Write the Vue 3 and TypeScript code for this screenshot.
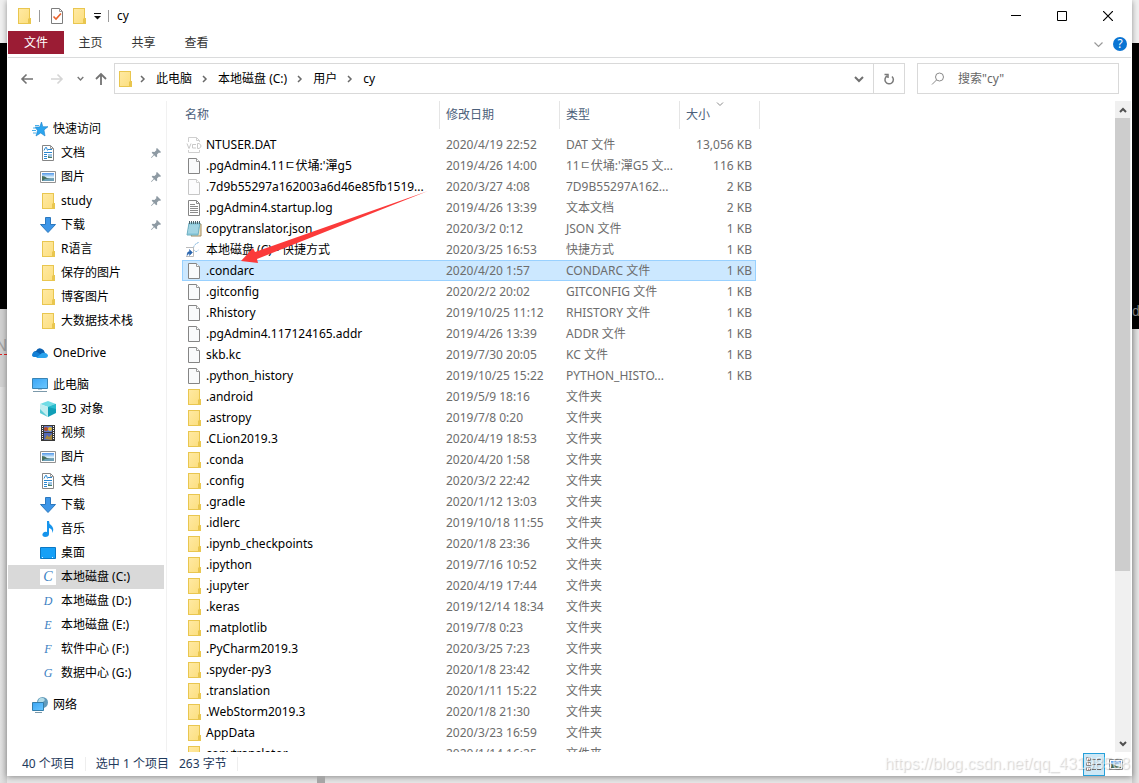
<script setup lang="ts">
import { ref } from 'vue'

interface NavItem { label: string; icon: string; letter?: string; pinned?: boolean; current?: boolean }
interface NavGroup { label: string; icon: string; items: NavItem[] }
interface FileRow { name: string; date: string; type: string; size: string; icon: string; selected?: boolean }

const groups: NavGroup[] = [
  {
    label: '快速访问', icon: 'star', items: [
      { label: '文档', icon: 'doc', pinned: true },
      { label: '图片', icon: 'picture', pinned: true },
      { label: 'study', icon: 'folder', pinned: true },
      { label: '下载', icon: 'download', pinned: true },
      { label: 'R语言', icon: 'folder' },
      { label: '保存的图片', icon: 'folder' },
      { label: '博客图片', icon: 'folder' },
      { label: '大数据技术栈', icon: 'folder' },
    ],
  },
  { label: 'OneDrive', icon: 'cloud', items: [] },
  {
    label: '此电脑', icon: 'pc', items: [
      { label: '3D 对象', icon: 'cube' },
      { label: '视频', icon: 'video' },
      { label: '图片', icon: 'picture' },
      { label: '文档', icon: 'doc' },
      { label: '下载', icon: 'download' },
      { label: '音乐', icon: 'music' },
      { label: '桌面', icon: 'desktop' },
      { label: '本地磁盘 (C:)', icon: 'drive', letter: 'C', current: true },
      { label: '本地磁盘 (D:)', icon: 'drive', letter: 'D' },
      { label: '本地磁盘 (E:)', icon: 'drive', letter: 'E' },
      { label: '软件中心 (F:)', icon: 'drive', letter: 'F' },
      { label: '数据中心 (G:)', icon: 'drive', letter: 'G' },
    ],
  },
  { label: '网络', icon: 'network', items: [] },
]

const folder = (name: string, date: string): FileRow => ({ name, date, type: '文件夹', size: '', icon: 'folder' })

const files: FileRow[] = [
  { name: 'NTUSER.DAT', date: '2020/4/19 22:52', type: 'DAT 文件', size: '13,056 KB', icon: 'vcd' },
  { name: '.pgAdmin4.11ㄷ伏埇:\'潬g5', date: '2019/4/26 14:00', type: '11ㄷ伏埇:\'潬G5 文...', size: '116 KB', icon: 'file' },
  { name: '.7d9b55297a162003a6d46e85fb1519...', date: '2020/3/27 4:08', type: '7D9B55297A162...', size: '2 KB', icon: 'hidden' },
  { name: '.pgAdmin4.startup.log', date: '2019/4/26 13:39', type: '文本文档', size: '2 KB', icon: 'text' },
  { name: 'copytranslator.json', date: '2020/3/2 0:12', type: 'JSON 文件', size: '1 KB', icon: 'notepad' },
  { name: '本地磁盘 (C) - 快捷方式', date: '2020/3/25 16:53', type: '快捷方式', size: '1 KB', icon: 'shortcut' },
  { name: '.condarc', date: '2020/4/20 1:57', type: 'CONDARC 文件', size: '1 KB', icon: 'file', selected: true },
  { name: '.gitconfig', date: '2020/2/2 20:02', type: 'GITCONFIG 文件', size: '1 KB', icon: 'file' },
  { name: '.Rhistory', date: '2019/10/25 11:12', type: 'RHISTORY 文件', size: '1 KB', icon: 'file' },
  { name: '.pgAdmin4.117124165.addr', date: '2019/4/26 13:39', type: 'ADDR 文件', size: '1 KB', icon: 'file' },
  { name: 'skb.kc', date: '2019/7/30 20:05', type: 'KC 文件', size: '1 KB', icon: 'file' },
  { name: '.python_history', date: '2019/10/25 15:22', type: 'PYTHON_HISTO...', size: '1 KB', icon: 'file' },
  folder('.android', '2019/5/9 18:16'),
  folder('.astropy', '2019/7/8 0:20'),
  folder('.CLion2019.3', '2020/4/19 18:53'),
  folder('.conda', '2020/4/20 1:58'),
  folder('.config', '2020/3/2 22:42'),
  folder('.gradle', '2020/1/12 13:03'),
  folder('.idlerc', '2019/10/18 11:55'),
  folder('.ipynb_checkpoints', '2020/1/8 23:36'),
  folder('.ipython', '2019/7/16 10:52'),
  folder('.jupyter', '2020/4/19 17:44'),
  folder('.keras', '2019/12/14 18:34'),
  folder('.matplotlib', '2019/7/8 0:23'),
  folder('.PyCharm2019.3', '2020/3/25 7:23'),
  folder('.spyder-py3', '2020/1/8 23:42'),
  folder('.translation', '2020/1/11 15:22'),
  folder('.WebStorm2019.3', '2020/1/8 21:30'),
  folder('AppData', '2020/3/23 16:59'),
  folder('copytranslator', '2020/1/14 16:25'),
]

const crumbs = ['此电脑', '本地磁盘 (C:)', '用户', 'cy']
const query = ref('')
</script>

<template>
  <div class="desktop">
    <svg class="symbols" aria-hidden="true">
      <defs>
        <linearGradient id="g-folder" x1="0" y1="0" x2="1" y2="1"><stop offset="0" stop-color="#ffe9a2" /><stop offset="1" stop-color="#fcdf80" /></linearGradient>
        <linearGradient id="g-sky" x1="0" y1="0" x2="0" y2="1"><stop offset="0" stop-color="#4f95e8" /><stop offset=".5" stop-color="#d9eefa" /><stop offset="1" stop-color="#fff" /></linearGradient>
        <linearGradient id="g-screen" x1="0" y1="0" x2="1" y2="1"><stop offset="0" stop-color="#3aa5f5" /><stop offset="1" stop-color="#6cc8ff" /></linearGradient>
      </defs>
      <symbol id="folder" viewBox="0 0 16 16"><path d="M2 0h12v10h1v6H2z" fill="#e9c64f" /><path d="M3 1h10v14H3z" fill="url(#g-folder)" /><path d="M12.500 15v-4l1-1v5z" fill="#ffe9a2" stroke="#e9c64f" /></symbol>
      <symbol id="file" viewBox="0 0 16 16"><path d="M2.500.5h8l3 3v12h-11z" fill="#f9fafb" stroke="#858585" /><path d="M10.500.5v3h3" fill="#fff" stroke="#9a9a9a" /></symbol>
      <symbol id="hidden" viewBox="0 0 16 16"><path d="M2.500.5h8l3 3v12h-11z" fill="#fcfcfd" stroke="#c6c6c6" /><path d="M10.500.5v3h3" fill="#fff" stroke="#d0d0d0" /></symbol>
      <symbol id="vcd" viewBox="0 0 16 16"><path d="M2.500 5V.5h8l3 3V5M2.500 13v2.500h11V13M10.500.5v3h3" fill="none" stroke="#cfcfcf" /><path d="M1 6.500l2 5 2-5M10 7.500H6.500v3.500H10M11.500 6.500v5h1.500q2-1 2-2.500t-2-2.500z" fill="none" stroke="#c9c9c9" /></symbol>
      <symbol id="text" viewBox="0 0 16 16"><path d="M2.500.5h8l3 3v12h-11z" fill="#fff" stroke="#858585" /><path d="M10.500.5v3h3M4 4.500h5M4 6.500h8M4 8.500h8M4 10.500h8M4 12.500h8" fill="none" stroke="#8c8c8c" /></symbol>
      <symbol id="notepad" viewBox="0 0 16 16"><path d="M13 3h2v12H5z" fill="#f2e4c1" stroke="#a18a5d" /><path d="M3 2h11l-2 12H1z" fill="#8fcbdc" stroke="#6fb0c2" /><path d="M3 5h10M3 7h9M2 9h10M2 11h10" stroke="#d1edf3" stroke-width=".6" /><path d="M3.500 0v3M5.500 0v3M7.500 0v3M9.500 0v3M11.500 0v3M13.500 0v3" stroke="#4b646c" /></symbol>
      <symbol id="shortcut" viewBox="0 0 16 16"><path d="M12.500.5q-5 2-5 6 0 3 3 3l2-1.500" fill="none" stroke="#6faad8" stroke-dasharray="2 1" /><path d="M-.5 5.500h8v9h-8z" fill="#fff" stroke="#bbb" /><path d="M1 13.500q0-4 2.500-4V7.500l3 3-3 3v-2Q2 11.500 1 13.500z" fill="#2864ad" stroke="#2864ad" stroke-width=".5" /></symbol>
      <symbol id="doc" viewBox="0 0 16 16"><path d="M2.500.5h8l3 3v12h-11z" fill="#fff" stroke="#858585" /><path d="M10.500.5v3h3" fill="none" stroke="#9a9a9a" /><path d="M4 5.500l1.500-3h1l1 3M8 4.500h4M4 7.500h8M4 9.500h3M4 11.500h3M4 13.500h3" fill="none" stroke="#2a87d0" /><path d="M8 9h4v4H8z" fill="#a0c5e5" /><path d="M8 11l2 1h2v1H8z" fill="#4b7b64" /></symbol>
      <symbol id="picture" viewBox="0 0 16 16"><path d="M.5 2.500h15v11H.5z" fill="#fff" stroke="#929292" /><path d="M2 4h12v8H2z" fill="url(#g-sky)" /><path d="M2 7q3 0 5 2l7 1v2H2z" fill="#48705e" /><path d="M5 10l9-1v3H2z" fill="#6da0b8" /></symbol>
      <symbol id="download" viewBox="0 0 16 16"><path d="M5.500.5h5v7h5L8 15.500.5 7.500h5z" fill="#3d96e8" stroke="#2c78be" /></symbol>
      <symbol id="star" viewBox="0 0 16 16"><path d="M9.500 1l1.300 4.700H16l-4 3.200 1 6.100-4.300-3L4 15l1.500-5.500-2.500-3.500h4.700z" fill="#2aa5ef" stroke="#1d82cb" stroke-width=".6" /><path d="M3 4.500h4M1 7h3M0 9.500h4M1 12h3" stroke="#4aaee9" /></symbol>
      <symbol id="cloud" viewBox="0 0 16 16"><path d="M1 9q0-3 3-3Q6 2 10 4q2 .5 3 4l-5 4z" fill="#0a60b0" /><path d="M0 10q1-4 5-3l8 5H3q-3 0-3-2z" fill="#1480d5" /><path d="M4 13l6-5q4-1 6 2 0 3-3 3z" fill="#2ba4ee" /></symbol>
      <symbol id="pc" viewBox="0 0 16 16"><path d="M.5 1.500h15v10H.5z" fill="url(#g-screen)" stroke="#3984b4" /><path d="M6 12h4v1H6z" fill="#b7cad6" /><path d="M1 14.500h14" stroke="#7c99aa" /></symbol>
      <symbol id="cube" viewBox="0 0 16 16"><path d="M0 3l8-3 8 3-8 3z" fill="#71dce5" /><path d="M0 3l8 3v10l-8-4z" fill="#c0edf0" /><path d="M0 8l8 8-8-4z" fill="#5bccd6" /><path d="M8 6l8-3v9l-8 4z" fill="#119fb7" /><path d="M8 6l8-3v5z" fill="#27bccd" /></symbol>
      <symbol id="video" viewBox="0 0 16 16"><path d="M1 0h14v16H1z" fill="#383838" /><path d="M2.500 1v14M13.500 1v14" stroke="#fff" stroke-dasharray="1 1" /><path d="M4 1h8v6H4z" fill="#617acb" /><path d="M4 8h8v7H4z" fill="#5269b8" /><circle cx="6" cy="4" r="2" fill="#b74c28" /><circle cx="10" cy="4" r="2" fill="#e5bb35" /><path d="M5 14l2-4 2 2 3-3v6z" fill="#a9893d" /></symbol>
      <symbol id="music" viewBox="0 0 16 16"><path d="M7 0h2q0 3 2 4 4 4 1 8 1-4-3-5v6q0 3-4 3-4-1-2-4 2-2 4-1z" fill="#1694ec" /></symbol>
      <symbol id="desktop" viewBox="0 0 16 16"><path d="M.5 2.500h15v11H.5z" fill="#16a0f7" stroke="#0b78c4" /><path d="M2 12.500h1M12 12.500h2" stroke="#e0f2fd" stroke-dasharray="1 1" /></symbol>
      <symbol id="network" viewBox="0 0 16 16"><circle cx="10.500" cy="5.500" r="5.500" fill="#629bbb" /><path d="M7 2q4-3 6 1l-3 3-4-1z" fill="#b4dce7" /><path d="M.5 5.500h11v8H.5z" fill="url(#g-screen)" stroke="#347eaa" /><path d="M3 15.500h7" stroke="#7c99aa" /></symbol>
      <symbol id="pin" viewBox="0 0 10 10"><path d="M6 0l4 4-1 1-1-.5-2 2 .2 2-1 .8-2-2L.5 10 0 9.500l2.700-2.700-2-2 .8-1 2 .2 2-2L5 1z" fill="#8e9aa3" /></symbol>
      <symbol id="right" viewBox="0 0 8 8"><path d="M2 1l3 3-3 3" fill="none" stroke="#6a6a6a" stroke-width="1.500" /></symbol>
      <symbol id="down" viewBox="0 0 10 10"><path d="M1 3l4 4 4-4" fill="none" stroke="currentColor" stroke-width="2" /></symbol>
    </svg>

    <div class="backdrop left"><div class="pale"></div><div class="dark"></div><div class="grey"><span>HN</span></div><div class="rest"></div></div>

    <main class="window">
      <header class="titlebar">
        <svg class="i16"><use href="#folder" /></svg>
        <span class="bar first"></span>
        <button class="plain quick" aria-label="属性"><svg class="i16" viewBox="0 0 16 16"><path d="M2.500.5h8l3 3v12h-11z" fill="#fff" stroke="#7d7d7d" /><path d="M10.500.5v3h3" fill="none" stroke="#9a9a9a" /><path d="M4.500 8.500l2.500 2.500 5-5.500" fill="none" stroke="#e9622c" stroke-width="1.600" /></svg></button>
        <button class="plain quick" aria-label="新建文件夹"><svg class="i16"><use href="#folder" /></svg></button>
        <button class="plain customize" aria-label="自定义快速访问工具栏"><svg width="8" height="8" viewBox="0 0 8 8"><path d="M1 1.500h7" stroke="#111" /><path d="M1 4h7L4.500 7.500z" fill="#111" /></svg></button>
        <span class="bar second"></span>
        <h1>cy</h1>
        <div class="captions">
          <button class="plain" aria-label="最小化"><svg width="10" height="10"><path d="M0 4.500h10" stroke="#000" /></svg></button>
          <button class="plain" aria-label="最大化"><svg width="10" height="10"><path d="M.5.5h9v9h-9z" fill="none" stroke="#000" /></svg></button>
          <button class="plain" aria-label="关闭"><svg width="10" height="10"><path d="M0 0l10 10M10 0L0 10" stroke="#000" stroke-width="1.200" /></svg></button>
        </div>
      </header>

      <nav class="tabs">
        <button class="file-tab">文件</button>
        <button>主页</button><button>共享</button><button>查看</button>
        <span class="grow"></span>
        <button class="plain expand" aria-label="展开功能区"><svg width="9" height="9" viewBox="0 0 9 9"><path d="M.5 2.500l4 4 4-4" fill="none" stroke="#999" stroke-width="1.200" /></svg></button>
        <button class="help" aria-label="帮助">?</button>
      </nav>

      <div class="navigation">
        <button class="plain back" aria-label="返回"><svg width="14" height="12" viewBox="0 0 14 12"><path d="M13 6H2M6.500 1.500L2 6l4.500 4.500" fill="none" stroke="#737373" stroke-width="1.600" /></svg></button>
        <button class="plain forward" aria-label="前进"><svg width="14" height="12" viewBox="0 0 14 12"><path d="M0 6h11M6.500 1.500L11 6l-4.500 4.500" fill="none" stroke="#d5d5d5" stroke-width="1.600" /></svg></button>
        <button class="plain recent" aria-label="最近浏览的位置"><svg width="7" height="7"><use href="#down" /></svg></button>
        <button class="plain up" aria-label="上移"><svg width="12" height="14" viewBox="0 0 12 14"><path d="M6 13V2M1 7l5-5 5 5" fill="none" stroke="#737373" stroke-width="1.800" /></svg></button>
        <div class="address">
          <svg class="i16"><use href="#folder" /></svg>
          <ol>
            <li v-for="crumb in crumbs" :key="crumb"><svg width="8" height="8"><use href="#right" /></svg><a href="#">{{ crumb }}</a></li>
          </ol>
          <button class="plain history" aria-label="历史记录"><svg width="10" height="10"><use href="#down" /></svg></button>
          <button class="plain refresh" aria-label="刷新"><svg width="12" height="12" viewBox="0 0 12 12"><path d="M9 3.500A4.200 4.200 0 1 1 4 3M1.500 1.500H5V5" fill="none" stroke="#7a7a7a" stroke-width="1.500" /></svg></button>
        </div>
        <label class="search">
          <svg width="14" height="14" viewBox="0 0 14 14"><circle cx="8.500" cy="5" r="4" fill="none" stroke="#8a8a8a" /><path d="M5.500 8L1 12.500" stroke="#8a8a8a" /></svg>
          <input v-model="query" type="text" placeholder="搜索&quot;cy&quot;" aria-label="搜索&quot;cy&quot;">
        </label>
      </div>

      <div class="content">
        <aside>
          <ul v-for="group in groups" :key="group.label" class="group">
            <li class="root"><a href="#"><svg class="i16"><use :href="'#' + group.icon" /></svg>{{ group.label }}</a></li>
            <li v-for="item in group.items" :key="item.label" :class="{ current: item.current }">
              <a href="#">
                <span v-if="item.letter" class="drive" aria-hidden="true">{{ item.letter }}</span>
                <svg v-else class="i16"><use :href="'#' + item.icon" /></svg>
                {{ item.label }}
                <svg v-if="item.pinned" class="pin"><use href="#pin" /></svg>
              </a>
            </li>
          </ul>
        </aside>

        <section class="list">
          <table>
            <thead>
              <tr>
                <th>名称</th><th>修改日期</th><th>类型</th>
                <th class="sorted">大小<svg width="8" height="5" viewBox="0 0 8 5"><path d="M1 .5l3 3 3-3" fill="none" stroke="#8a8a8a" /></svg></th>
              </tr>
            </thead>
            <tbody>
              <tr v-for="file in files" :key="file.name" :class="{ selected: file.selected }">
                <td class="name"><svg class="i16"><use :href="'#' + file.icon" /></svg><span>{{ file.name }}</span></td>
                <td>{{ file.date }}</td>
                <td>{{ file.type }}</td>
                <td class="size">{{ file.size }}</td>
              </tr>
            </tbody>
          </table>
          <svg class="pointer" width="190" height="76" viewBox="0 0 190 76" aria-hidden="true"><path d="M1 70L13 57l2 4L188 0 17 68l1 4z" fill="#fb3a3a" /></svg>
        </section>

        <div class="scrollbar">
          <button class="plain" aria-label="向上滚动"><svg width="8" height="8" viewBox="0 0 8 8"><path d="M1 6l3-3 3 3" fill="none" stroke="#505050" stroke-width="2" /></svg></button>
          <div class="track"><div class="thumb"></div></div>
          <button class="plain" aria-label="向下滚动"><svg width="8" height="8" viewBox="0 0 8 8"><path d="M1 2l3 3 3-3" fill="none" stroke="#505050" stroke-width="2" /></svg></button>
        </div>
      </div>

      <footer>
        <span>40 个项目</span><i></i><span>选中 1 个项目</span><span class="bytes">263 字节</span><i></i>
        <span class="grow"></span>
        <button class="view active" aria-label="详细信息"><svg width="16" height="14" viewBox="0 0 16 14"><path d="M.5.5h4v3h-4zM.5 5.500h4v3h-4zM.5 10.500h4v3h-4z" fill="#fff" stroke="#8a8a8a" /><path d="M2 2h1M2 7h1M2 12h1" stroke="#a33" /><path d="M6 2.500h10M6 7.500h10M6 12.500h10" stroke="#777" stroke-dasharray="4 1" /></svg></button>
        <button class="view" aria-label="大图标"><svg width="14" height="11" viewBox="0 0 14 11"><path d="M.5.5h13v10H.5z" fill="#fff" stroke="#8a8a8a" /><path d="M2 2h10v7H2z" fill="url(#g-sky)" /><path d="M2 5q3 0 5 2l5 1v1H2z" fill="#48705e" /></svg></button>
      </footer>
      <div class="watermark">https://blog.csdn.net/qq_43198568</div>
    </main>

    <div class="backdrop right"><div class="pale"></div><div class="dark"><span>dn</span></div><div class="rest"></div></div>
    <div class="mark" aria-hidden="true"></div>
  </div>
</template>

<style>
html, body { background: #e6e6e6; }
</style>

<style scoped>
* { box-sizing: border-box; }
.desktop { position: relative; display: flex; height: 100vh; overflow: hidden; font: 12px/16px "Noto Sans", "Noto Sans CJK SC", sans-serif; color: #000; background: #e6e6e6; }
.symbols { position: absolute; width: 0; height: 0; }
.i16 { width: 16px; height: 16px; flex: none; overflow: visible; }
button { font: inherit; padding: 0; margin: 0; border: 0; background: none; color: inherit; }
.plain { display: flex; align-items: center; justify-content: center; flex: none; }
a { color: inherit; text-decoration: none; }
ul, ol { list-style: none; margin: 0; padding: 0; }
.grow { flex: 1; }

.backdrop { flex: 0 0 7px; display: flex; flex-direction: column; overflow: hidden; }
.backdrop .pale { height: 43px; background: #f0f0f0; }
.backdrop .dark { height: 266px; background: #000; }
.backdrop .grey { display: flex; justify-content: flex-end; height: 78px; padding-top: 29px; background: #d0d0d0; color: #a0a0a0; font: 16px/16px "Liberation Sans", sans-serif; }
.grey span { height: 17px; border-bottom: 1px dashed #e02020; }
.backdrop .rest { flex: 1; background: linear-gradient(90deg, #e2e2e2, #d0d0d0); }
.right .dark { height: 286px; color: #888; padding-top: 260px; font: 14px/16px "Liberation Sans", sans-serif; }
.right .rest { background: linear-gradient(270deg, #e6e6e6, #cacaca); }
.mark { position: absolute; left: 317px; bottom: 0; width: 8px; height: 7px; background: #a5a5a5; }

.window { position: relative; flex: 1; min-width: 0; height: calc(100vh - 7px); display: flex; flex-direction: column; padding: 0 1px; background: #fff; box-shadow: 0 1px 6px rgba(0, 0, 0, .4); }

.titlebar { display: flex; align-items: center; height: 31px; flex: none; padding-left: 8px; }
.bar { width: 1px; height: 12px; background: #9a9a9a; }
.first { margin: 0 9px 0 7px; }
.quick { margin-right: 6px; }
.customize { width: 8px; }
.second { margin: 0 8px 0 7px; }
h1 { margin: 0; font-size: 12px; font-weight: 400; }
.captions { margin-left: auto; display: flex; }
.captions button { width: 46px; height: 30px; }

.tabs { display: flex; flex: none; height: 27px; border-bottom: 1px solid #dadbdc; color: #333; }
.tabs button { width: 53px; height: 23px; padding-top: 1px; }
.tabs .file-tab { width: 56px; background: #9b1c34; color: #fff; }
.tabs .expand { width: 14px; height: 26px; }
.tabs .help { width: 14px; height: 14px; padding: 0; margin: 6px 4px 0 8px; border-radius: 50%; background: #0a74d3; color: #fff; line-height: 14px; }

.navigation { display: flex; flex: none; align-items: center; height: 43px; padding: 0 12px 2px; }
.navigation .back { width: 14px; }
.navigation .forward { width: 14px; margin-left: 17px; }
.recent { width: 8px; margin-left: 11px; color: #777; }
.up { width: 12px; margin-left: 11px; }
.address { display: flex; align-items: center; flex: 1; height: 31px; margin-left: 7px; padding-left: 2px; border: 1px solid #d9d9d9; }
.address ol { display: flex; flex: 1; margin-left: 6px; }
.address li { display: flex; align-items: center; gap: 9px; margin-right: 9px; }
.address a { white-space: nowrap; }
.history { width: 29px; height: 29px; color: #707070; }
.refresh { width: 31px; height: 29px; border-left: 1px solid #d9d9d9; }
.search { display: flex; align-items: center; width: 202px; height: 31px; margin-left: 12px; padding-left: 13px; border: 1px solid #d9d9d9; }
.search input { flex: 1; min-width: 0; margin-left: 13px; padding: 0; border: 0; outline: 0; font: inherit; background: none; }
.search input::placeholder { color: #666; opacity: 1; }

.content { display: flex; flex: 1; min-height: 0; }
aside { flex: 0 0 159px; padding: 16px 2px 0 0; border-right: 1px solid #f1f1f1; overflow: hidden; }
.group { margin-bottom: 8px; }
.group a { display: flex; align-items: center; gap: 5px; height: 24px; padding: 0 3px 0 32px; white-space: nowrap; }
.group .root a { padding-left: 24px; }
.group .current { background: #d9d9d9; }
.group .pin { width: 10px; height: 10px; margin-left: auto; }
.drive { width: 16px; height: 16px; flex: none; color: #3a80c2; font: italic 12px/16px "Liberation Serif", serif; text-align: center; }
.current .drive { background: #fff; font-size: 14px; }

.list { position: relative; flex: 1; min-width: 0; padding-left: 15px; overflow: hidden; }
table, thead, tbody { display: block; }
tr { display: grid; grid-template-columns: 258px 120px 120px 76px; width: 574px; }
thead tr { grid-template-columns: 258px 120px 120px 80px; width: 578px; margin-bottom: 5px; }
th { position: relative; height: 28px; padding: 0 0 0 6px; border-right: 1px solid #e5e5e5; color: #4c607a; font-weight: 400; text-align: left; line-height: 27px; }
th:first-child { padding-left: 3px; }
.sorted svg { position: absolute; left: 36px; top: 1px; }
td { height: 21px; padding: 0 6px; color: #6d6d6d; line-height: 21px; white-space: nowrap; }
.name { display: flex; align-items: center; gap: 4px; padding: 0 0 0 4px; color: #000; }
.size { padding: 0 4px; text-align: right; }
.selected { background: #cce8ff; outline: 1px solid #99d1ff; outline-offset: -1px; }
.pointer { position: absolute; left: 73px; top: 90px; }

.scrollbar { display: flex; flex-direction: column; flex: 0 0 16px; background: #f0f0f0; }
.scrollbar button { height: 17px; }
.track { flex: 1; }
.thumb { width: 15px; height: 73.5%; background: #cdcdcd; }

footer { display: flex; flex: none; align-items: center; height: 24px; padding: 0 4px 0 14px; color: #1e395b; }
footer i { width: 1px; height: 14px; margin: 0 10px; background: #eee; }
.bytes { margin-left: 10px; }
.view { display: flex; align-items: center; justify-content: center; width: 22px; height: 23px; }
.view.active { background: #cde8f6; border: 1px solid #26a0da; }
.watermark { position: absolute; right: 2px; bottom: 2px; font: 16px/20px "Liberation Sans", sans-serif; color: rgba(255, 255, 255, .6); text-shadow: 1px 1px 1px rgba(0, 0, 0, .18); pointer-events: none; }
</style>
